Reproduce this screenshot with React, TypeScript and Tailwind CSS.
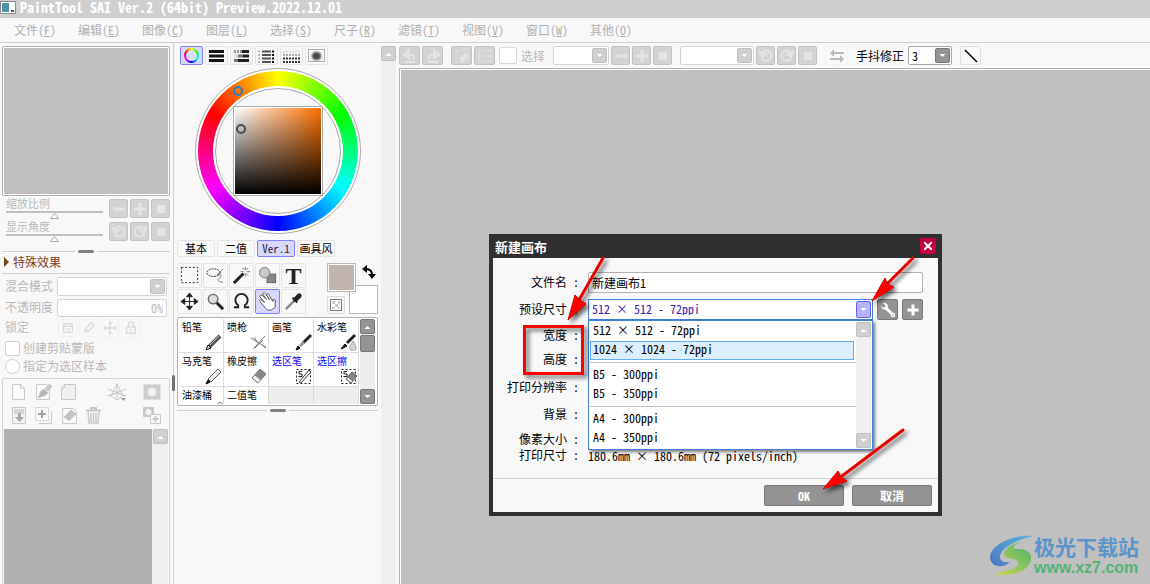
import type { ReactNode } from 'react';

const menus = [
  ['文件', 'F'], ['编辑', 'E'], ['图像', 'C'], ['图层', 'L'], ['选择', 'S'],
  ['尺子', 'R'], ['滤镜', 'T'], ['视图', 'V'], ['窗口', 'W'], ['其他', 'O'],
];

type IconProps = { children: ReactNode; className?: string; box?: string };

function Icon({ children, className = 'w-4 h-4', box = '0 0 16 16' }: IconProps) {
  return (
    <svg viewBox={box} className={`${className} shrink-0`} fill="none" stroke="currentColor" strokeWidth="1" aria-hidden="true">
      {children}
    </svg>
  );
}

const minus = <path d="M2 8h12" strokeWidth="3" />;
const plus = <path d="M2 8h12M8 2v12" strokeWidth="3" />;
const square = <rect x="4" y="4" width="8" height="8" fill="currentColor" stroke="none" />;
const rotateLeft = <path d="M4 10a5 5 0 1 0 1-6M2 4l2 5 4-3z" strokeWidth="2" />;
const rotateRight = <path d="M12 10a5 5 0 1 1-1-6M14 4l-2 5-4-3z" strokeWidth="2" />;

function GrayButton({ label, children, className = 'w-[19px]' }: { label: string; children: ReactNode; className?: string }) {
  return (
    <button
      aria-label={label}
      className={`${className} h-[19px] shrink-0 flex items-center justify-center rounded-xs border border-[#c3c3c3] bg-[#d3d3d3] text-[#e4e4e4]`}
    >
      <Icon>{children}</Icon>
    </button>
  );
}

function Arrow({ up = false }: { up?: boolean }) {
  return (
    <Icon className="w-[7px] h-1" box="0 0 7 4">
      <path d={up ? 'M.5 4h6L3.500 1z' : 'M.5 0h6L3.500 3z'} fill="currentColor" stroke="none" />
    </Icon>
  );
}

function ScrollButton({ up = false, dark = false }: { up?: boolean; dark?: boolean }) {
  const tone = dark ? 'bg-[#949494] border-[#777]' : 'bg-[#d0d0d0] border-[#c0c0c0]';
  return (
    <button aria-label={up ? '向上' : '向下'} className={`w-[15px] h-[15px] shrink-0 flex items-center justify-center rounded-xs border text-white ${tone}`}>
      <Arrow up={up} />
    </button>
  );
}

function Combo({ label, value = '', className, dark = false }: { label: string; value?: string; className: string; dark?: boolean }) {
  return (
    <div className={`${className} h-[19px] flex items-center shrink-0 border rounded-xs bg-white pr-px ${dark ? 'border-[#a8a8a8]' : 'border-[#d4d4d4]'}`}>
      <select aria-label={label} className="appearance-none flex-1 min-w-0 h-full pl-[3px] leading-none outline-none">
        <option>{value}</option>
      </select>
      <span className={`w-[15px] h-[15px] shrink-0 flex items-center justify-center rounded-xs border text-white ${dark ? 'bg-[#949494] border-[#777]' : 'bg-[#d0d0d0] border-[#c0c0c0]'}`}>
        <Arrow />
      </span>
    </div>
  );
}

function Splitter() {
  return (
    <div className="flex items-center gap-[3px] h-[3px]">
      <span className="flex-1 h-px bg-[#cfcfcf]" />
      <span className="w-4 h-[3px] rounded-xs bg-[#808080]" />
      <span className="flex-1 h-px bg-[#cfcfcf]" />
    </div>
  );
}

function ViewSlider({ label, children }: { label: string; children: ReactNode }) {
  return (
    <div className="flex items-center h-[23px] pl-1">
      <div className="flex-1 mr-1.5">
        <div className="text-[11px] leading-[11px] mb-0.5">{label}</div>
        <div className="h-0.5 bg-[#c0c0c0]" />
        <Icon className="w-[9px] h-[6px] mx-auto" box="0 0 9 6">
          <path d="M.5 5.500h8L4.500.5z" fill="#fff" stroke="#aaa" />
        </Icon>
      </div>
      <div className="flex gap-0.5">{children}</div>
    </div>
  );
}

const layerIcons = {
  page: <path d="M2.500 1.500h8l4 4v11h-12zM10.500 1.500v4h4" fill="#fafafa" />,
  pen: (
    <>
      <path d="M1.500 1.500h10l3 3v12h-13z" fill="#fafafa" />
      <path d="M3 15l3-7 3-2 4 4-2 2z" fill="#b5b5b5" />
      <path d="M11 7l5-5" strokeWidth="4" />
    </>
  ),
  folder: <path d="M1.500 16.500v-12l3-3h11v15zM4.500 1.500v3l-3 1" fill="#f0f0f0" />,
  ruler: (
    <>
      <path d="M9 0v17M0 13l9-3 9 3M9 1L3 13l6 4 6-4zM0 6l18 7M18 6L0 13" />
      <path d="M13 15h5l-2.500 3z" fill="#999" stroke="none" />
    </>
  ),
  mask: (
    <>
      <rect x="1" y="2" width="16" height="14" fill="#d0d0d0" />
      <circle cx="9" cy="9" r="4" fill="#f4f4f4" stroke="none" />
    </>
  ),
  merge: (
    <>
      <path d="M2.500.5h13v16h-13z" fill="#f4f4f4" />
      <path d="M4 2h10v5H4z" fill="#d5d5d5" stroke="none" />
      <path d="M8 6h3v4h3l-4.500 5L5 10h3z" fill="#a8a8a8" stroke="none" />
    </>
  ),
  copy: (
    <>
      <path d="M4 16.500h12.500V4" strokeWidth="1" />
      <path d="M.5.500h13v13H.5z" strokeDasharray="2 1" fill="#fafafa" />
      <path d="M7 3v8M3 7h8" stroke="#a0a0a0" strokeWidth="2" />
    </>
  ),
  clear: (
    <>
      <path d="M2.500 1.500h11l3 3v12h-14z" fill="#fafafa" />
      <path d="M4 10l7-7 5 4-7 7z" fill="#c4c4c4" />
    </>
  ),
  trash: (
    <>
      <path d="M1 3.500h15M6 3V1h5v2" strokeWidth="2" />
      <path d="M3 5l1 11h9l1-11M6 6v9M8.500 6v9M11 6v9" strokeWidth="1.500" />
    </>
  ),
  maskAdd: (
    <>
      <path d="M.5.500h10v9H.5z" fill="#c8c8c8" />
      <circle cx="5.500" cy="5" r="3" fill="#f4f4f4" stroke="none" />
      <path d="M7.500 7.500h10v9h-10z" fill="#fafafa" />
      <path d="M12.500 9v6M9.500 12h6" strokeWidth="2" />
    </>
  ),
};

function LayerButton({ name, label }: { name: keyof typeof layerIcons; label: string }) {
  return (
    <button aria-label={label} className="w-[19px] h-[18px] text-[#c8c8c8]">
      <Icon className="w-[18px] h-[18px]" box="0 0 18 18">{layerIcons[name]}</Icon>
    </button>
  );
}

const lockIcons = [
  { label: '锁定透明', d: 'M3 3h10v10H3zM6 3v3H3M9 3v3h4M6 9h3v4' },
  { label: '锁定绘画', d: 'M3 13l1-4 7-7 3 3-7 7zM4 9l3 3' },
  { label: '锁定移动', d: 'M8 1v14M1 8h14M6 3l2-2 2 2M6 13l2 2 2-2M3 6L1 8l2 2M13 6l2 2-2 2' },
  { label: '锁定全部', d: 'M3 7h10v7H3zM5 7V4a3 3 0 0 1 6 0v3M8 9v3' },
];

function LayerPanel() {
  return (
    <aside className="w-[174px] shrink-0 flex flex-col border-r border-[#cfcfcf] pt-[3px] pl-0.5 pr-[3px] text-[#b8b8b8]">
      <div className="h-[150px] shrink-0 border border-[#b0b0b0] rounded-xs bg-white p-px">
        <div className="h-full bg-[#c0c0c0]" />
      </div>
      <div className="pt-px pb-[7px]">
        <ViewSlider label="缩放比例">
          <GrayButton label="缩小">{minus}</GrayButton>
          <GrayButton label="放大">{plus}</GrayButton>
          <GrayButton label="重置缩放">{square}</GrayButton>
        </ViewSlider>
        <ViewSlider label="显示角度">
          <GrayButton label="左旋">{rotateLeft}</GrayButton>
          <GrayButton label="右旋">{rotateRight}</GrayButton>
          <GrayButton label="重置角度">{square}</GrayButton>
        </ViewSlider>
      </div>
      <Splitter />
      <button className="flex items-center gap-1 h-[21px] pl-0.5 pb-0.5 text-[#80401a] shrink-0 border-b border-[#cfcfcf]">
        <Icon className="w-[5px] h-[10px]" box="0 0 5 10">
          <path d="M0 0l5 5-5 5z" fill="currentColor" stroke="none" />
        </Icon>
        特殊效果
      </button>
      <div className="flex items-center h-[19px] mt-[3px] pl-[3px] gap-1 shrink-0">
        <span className="w-12 pb-0.5">混合模式</span>
        <Combo label="混合模式" className="w-[110px]" />
      </div>
      <div className="flex items-center h-[19px] mt-0.5 pl-[3px] gap-1 shrink-0">
        <label htmlFor="opacity" className="w-12 pb-0.5">不透明度</label>
        <input id="opacity" defaultValue="0%" className="w-[110px] h-[18px] border border-[#d4d4d4] rounded-xs bg-white text-right pr-[3px]" />
      </div>
      <div className="flex items-center h-[22px] pl-[3px] shrink-0">
        <span className="w-[53px] pb-0.5">锁定</span>
        <div className="flex gap-0.5">
          {lockIcons.map((lock) => (
            <button key={lock.label} aria-label={lock.label} className="w-[19px] h-[18px] flex items-center justify-center border border-[#f2f2f2] rounded-xs text-[#dadada]">
              <Icon className="w-3.5 h-3.5"><path d={lock.d} strokeWidth="1.500" /></Icon>
            </button>
          ))}
        </div>
      </div>
      <label className="flex items-center gap-[3px] h-[18px] pl-[3px] shrink-0">
        <input type="checkbox" className="appearance-none w-[15px] h-[15px] border border-[#d0d0d0] rounded-xs bg-white" />
        创建剪贴蒙版
      </label>
      <label className="flex items-center gap-[3px] h-[18px] pl-[3px] mb-px shrink-0">
        <input type="radio" className="appearance-none w-[15px] h-[15px] border border-[#d0d0d0] rounded-full bg-white" />
        指定为选区样本
      </label>
      <div className="flex-1 flex flex-col min-h-0 border border-b-0 border-[#d4d4d4] rounded-t-xs mt-0.5 px-px">
        <div className="flex items-center pt-1 px-1.5 gap-1.5 shrink-0">
          <LayerButton name="page" label="新建图层" />
          <LayerButton name="pen" label="新建钢笔图层" />
          <LayerButton name="folder" label="新建图层组" />
          <span className="flex-1" />
          <LayerButton name="ruler" label="透视尺" />
          <span className="w-1" />
          <LayerButton name="mask" label="图层蒙版" />
        </div>
        <div className="flex items-center pt-1.5 pb-1 px-1.5 gap-1.5 shrink-0">
          <LayerButton name="merge" label="向下合并" />
          <LayerButton name="copy" label="复制图层" />
          <LayerButton name="clear" label="清除图层" />
          <LayerButton name="trash" label="删除图层" />
          <span className="flex-1" />
          <LayerButton name="maskAdd" label="添加蒙版" />
        </div>
        <div className="flex-1 flex min-h-0">
          <div className="flex-1 bg-[#b0b0b0]" />
          <div className="w-4 bg-[#efefef] pl-px">
            <ScrollButton up />
          </div>
        </div>
      </div>
    </aside>
  );
}

function Bars({ kind }: { kind: number }) {
  if (kind === 0) return <path d="M1 3.500h15M1 8h15M1 12.500h15" stroke="#111" strokeWidth="3" />;
  if (kind === 1)
    return (
      <>
        <path d="M1 3.500h8" stroke="#999" strokeWidth="3" strokeDasharray="2 1" />
        <path d="M9 3.500h7M10 8h6M5 12.500h11" stroke="#222" strokeWidth="3" />
        <path d="M1 8h4" stroke="#ddd" strokeWidth="3" />
        <path d="M5 8h5M1 12.500h4" stroke="#777" strokeWidth="3" />
      </>
    );
  if (kind === 2)
    return (
      <>
        <path d="M4 3.500h9M4 7h9M4 10.500h9M4 14h9" stroke="#555" strokeWidth="2" />
        <path d="M0 3.500h3M0 7h3M0 10.500h3M0 14h3" stroke="#bbb" strokeWidth="2" strokeDasharray="2 1" />
        <path d="M14 3.500h3M14 7h3M14 10.500h3M14 14h3" stroke="#111" strokeWidth="2" strokeDasharray="2 1" />
      </>
    );
  return (
    <>
      <path d="M0 3.500h17" stroke="#ddd" strokeWidth="2" strokeDasharray="2 1" />
      <path d="M0 7h17" stroke="#aaa" strokeWidth="2" strokeDasharray="2 1" />
      <path d="M0 10.500h17M0 14h17" stroke="#333" strokeWidth="2" strokeDasharray="2 1" />
    </>
  );
}

function ColorModes() {
  return (
    <div className="flex gap-0.5">
      <button aria-label="色轮" className="w-[23px] h-[19px] flex items-center justify-center rounded-xs border border-[#8080ff] bg-[#d8d8ff]">
        <span className="w-[15px] h-[15px] rounded-full p-0.5 bg-[conic-gradient(#ff0,#0f0,#0ff,#00f,#f0f,#f00,#ff0)]">
          <span className="block w-full h-full rounded-full bg-[#dcdcff]" />
        </span>
      </button>
      {['RGB滑块', 'HSV滑块', '中间色', '色板'].map((label, i) => (
        <button key={label} aria-label={label} className="w-[23px] h-[19px] flex items-center justify-center rounded-xs border border-[#e4e4e4]">
          <Icon className="w-[17px] h-4" box="0 0 17 16"><Bars kind={i} /></Icon>
        </button>
      ))}
      <button aria-label="调色盘" className="w-[23px] h-[19px] flex items-center justify-center rounded-xs border border-[#e4e4e4]">
        <span className="w-[17px] h-[13px] border border-[#b0b0b0] flex items-center justify-center">
          <span className="w-[9px] h-2 rounded-full bg-[#444] blur-[1px]" />
        </span>
      </button>
    </div>
  );
}

function ColorWheel() {
  return (
    <div className="w-[166px] h-[166px] mx-auto rounded-full border border-[#aaa] p-0.5 bg-white">
      <div className="relative w-full h-full rounded-full bg-[conic-gradient(#ff0,#0f0,#0ff,#00f,#f0f,#f00,#ff0)] p-[15px]">
        <div className="w-full h-full rounded-full bg-white p-0.5">
          <div className="w-full h-full rounded-full border border-[#aaa] bg-[#f8f8f8] flex items-center justify-center">
            <div className="relative w-[90px] h-[90px] shrink-0 border border-[#aaa] bg-white p-px">
              <div className="w-full h-full bg-[linear-gradient(to_top,#000,transparent),linear-gradient(to_right,#fff,#ff7000)]" />
              <span className="absolute left-0.5 top-[17px] w-[10px] h-[10px] rounded-full border-2 border-[#444c50]" />
            </div>
          </div>
        </div>
        <span className="absolute left-[35px] top-[15px] w-[10px] h-[10px] rounded-full border-2 border-[#1c80d8]" />
      </div>
    </div>
  );
}

const tools = [
  { label: '矩形选择', icon: <rect x="2.500" y="2.500" width="17" height="16" strokeDasharray="2 2" /> },
  {
    label: '套索',
    icon: (
      <>
        <ellipse cx="9" cy="8" rx="7" ry="4" strokeDasharray="2 1" />
        <path d="M19 4l-6 6M13 10c4-1 5 2 2 4s0 4 4 4" stroke="#777" />
      </>
    ),
  },
  {
    label: '魔棒',
    icon: (
      <>
        <path d="M3 19L13 9" strokeWidth="3" />
        <path d="M15 2v3M15 9v3M10 7h3M17 7h3M12 3l2 2M18 3l-2 2M18 11l-2-2" stroke="#777" />
      </>
    ),
  },
  {
    label: '形状',
    icon: (
      <>
        <rect x="10.500" y="9.500" width="9" height="9" fill="#888" stroke="#666" />
        <circle cx="8" cy="8" r="5.500" fill="#c8c8c8" stroke="#777" />
      </>
    ),
  },
  { label: '文字', glyph: 'T' },
  { label: '移动', icon: <path d="M11 4v14M4 11h14M8 6l3-4 3 4zM8 16l3 4 3-4zM6 8l-4 3 4 3zM16 8l4 3-4 3z" fill="currentColor" /> },
  {
    label: '缩放',
    icon: (
      <>
        <path d="M12 12l7 7" strokeWidth="3" />
        <circle cx="8.500" cy="8.500" r="5" fill="#ddd" stroke="#666" strokeWidth="1.500" />
      </>
    ),
  },
  { label: '旋转', icon: <path d="M3 17h4.500v-2a6.500 6.500 0 1 1 7 0v2H19" strokeWidth="2" /> },
  {
    label: '抓手',
    active: true,
    icon: <path d="M9 18L3 11c-1-2 1-3 2-1l3 2-5-6c0-2 2-2 3-1l4 4-4-6c1-2 2-1 3 0l4 6-3-5c1-2 3-1 3 1l4 6v-2c2-1 3 1 2 3l0 5-4 3h-4z" fill="#fff" stroke="#555" />,
  },
  {
    label: '吸管',
    icon: (
      <>
        <path d="M3 19l9-9" strokeWidth="2.500" stroke="#888" />
        <path d="M10 7l5 5" strokeWidth="2" />
        <path d="M13 9l4-4" strokeWidth="5" strokeLinecap="round" />
      </>
    ),
  },
];

function ToolGrid() {
  return (
    <div className="flex justify-between">
      <div className="grid grid-cols-5 gap-px">
        {tools.map((tool) => (
          <button
            key={tool.label}
            aria-label={tool.label}
            className={`w-[25px] h-[25px] flex items-center justify-center rounded-xs border text-[#222] ${tool.active ? 'border-[#8080ff] bg-[#d8d8ff]' : 'border-[#e4e4e4]'}`}
          >
            {tool.glyph ? (
              <span className="text-[24px] leading-none font-bold font-['Liberation_Serif',serif]">{tool.glyph}</span>
            ) : (
              <Icon className="w-[21px] h-[21px]" box="0 0 22 22">{tool.icon}</Icon>
            )}
          </button>
        ))}
      </div>
      <div className="relative w-[51px] h-[51px]">
        <button aria-label="背景色" className="absolute right-0 bottom-0 w-[29px] h-[29px] border border-[#b8b8b8] bg-white" />
        <button aria-label="前景色" className="absolute left-0 top-0 w-[29px] h-[29px] border border-[#b8b8b8] bg-white p-px">
          <span className="block w-full h-full bg-[#c0b4ac]" />
        </button>
        <button aria-label="交换颜色" className="absolute right-0.5 top-0.5 w-3.5 h-3.5">
          <Icon className="w-3.5 h-3.5" box="0 0 14 14">
            <path d="M4 4c4 0 6 2 6 6" strokeWidth="2" />
            <path d="M0 4l5-4v8zM6 9h8l-4 5z" fill="currentColor" stroke="none" />
          </Icon>
        </button>
        <button aria-label="透明色" className="absolute left-0 bottom-0 w-[18px] h-[18px] flex items-center justify-center border border-[#dcdcdc] rounded-xs">
          <Icon className="w-3 h-3" box="0 0 12 12">
            <rect x=".5" y=".5" width="11" height="11" fill="#fff" stroke="#777" />
            <path d="M2 2h3v3H2zM8 2h2v3H8zM5 5h3v3H5zM2 8h3v2H2zM8 8h2v2H8z" fill="#ccc" stroke="none" />
          </Icon>
        </button>
      </div>
    </div>
  );
}

const brushArt = {
  pencil: (
    <>
      <path d="M4 14L15 3" strokeWidth="4" stroke="#555" />
      <path d="M1 17l2-5 3 3z" fill="#ddd" />
      <path d="M5 12l9-9" stroke="#bbb" />
    </>
  ),
  air: <path d="M1 5l11 7 4 2M3 16L15 3M5 15l8-8M4 4l4 6M12 12l4 3" stroke="#777" strokeWidth="1" />,
  brush: (
    <>
      <path d="M8 10l8-8" strokeWidth="3" stroke="#222" />
      <path d="M5 13l4-4" strokeWidth="3" stroke="#999" />
      <path d="M1 17l2-4 2 2z" fill="#111" />
    </>
  ),
  water: (
    <>
      <path d="M7 10l8-8" strokeWidth="3" stroke="#222" />
      <path d="M1 16l4-5 2 2z" fill="#333" />
      <path d="M13 8c-6 8-2 10 0 10s6-2 0-10z" fill="#d0d0d0" stroke="#aaa" />
    </>
  ),
  marker: (
    <>
      <path d="M3 12L13 2l3 3L6 15z" fill="#eee" stroke="#555" />
      <path d="M1 17l2-4 2 2z" fill="#222" />
    </>
  ),
  eraser: (
    <>
      <path d="M2 11l8-9 6 5-8 9z" fill="#888" stroke="#777" />
      <path d="M2 11l3-3 6 5-3 3z" fill="#eee" stroke="#888" />
    </>
  ),
  selPen: (
    <>
      <rect x="1.500" y="2.500" width="14" height="14" stroke="#222" strokeDasharray="2 2" />
      <path d="M4 15L14 3l2 2L6 16z" fill="#eee" stroke="#444" />
      <path d="M7 4.500H4v2.500h3v2.500H3.500" stroke="#222" />
    </>
  ),
  selEraser: (
    <>
      <rect x="1.500" y="2.500" width="14" height="14" stroke="#222" strokeDasharray="2 2" />
      <path d="M6 12l6-7 5 4-6 7z" fill="#888" stroke="#555" />
      <path d="M6 12l2-2 5 4-2 2z" fill="#eee" stroke="#666" />
      <path d="M7 4.500H4v2.500h3v2.500H3.500" stroke="#222" />
    </>
  ),
  bucket: <path d="M12 3l3-2 3 2" stroke="#888" />,
};

const brushes: { name: string; art?: keyof typeof brushArt; selection?: boolean }[] = [
  { name: '铅笔', art: 'pencil' },
  { name: '喷枪', art: 'air' },
  { name: '画笔', art: 'brush' },
  { name: '水彩笔', art: 'water' },
  { name: '马克笔', art: 'marker' },
  { name: '橡皮擦', art: 'eraser' },
  { name: '选区笔', art: 'selPen', selection: true },
  { name: '选区擦', art: 'selEraser', selection: true },
  { name: '油漆桶', art: 'bucket' },
  { name: '二值笔' },
  { name: '' },
  { name: '' },
];

function BrushList() {
  return (
    <div className="flex justify-between h-[89px] border border-[#b0b0b0] rounded-xs p-px pr-0.5 bg-white">
      <div className="grid grid-cols-4 auto-rows-[34px] h-full overflow-hidden">
        {brushes.map((brush, i) => (
          <button
            key={i}
            className={`w-[45px] flex flex-col border-r border-b border-[#dcdcdc] text-[10px] leading-3 text-left pl-[3px] pt-0.5 ${brush.name ? '' : 'bg-[#eee]'} ${brush.selection ? 'text-[#0000ff]' : 'text-black'}`}
          >
            <span className="h-3">{brush.name}</span>
            {brush.art && (
              <Icon className="w-[18px] h-[18px] ml-auto" box="0 0 18 18">{brushArt[brush.art]}</Icon>
            )}
          </button>
        ))}
      </div>
      <div className="w-[15px] flex flex-col bg-[#eee]">
        <ScrollButton up dark />
        <span className="h-[17px] mt-px rounded-xs border border-[#777] bg-[#949494]" />
        <span className="flex-1" />
        <ScrollButton dark />
      </div>
    </div>
  );
}

function ToolPanel() {
  return (
    <aside className="w-[225px] shrink-0 flex pt-[3px] pl-[3px]">
      <div className="w-[201px]">
        <div className="pl-[3px]"><ColorModes /></div>
        <div className="pt-[3px] pb-1.5"><ColorWheel /></div>
        <div className="flex gap-0.5 text-[11px]">
          {['基本', '二值', 'Ver.1', '画具风'].map((tab) => (
            <button
              key={tab}
              className={`w-[38px] h-[17px] flex items-center justify-center whitespace-nowrap rounded-xs border ${tab === 'Ver.1' ? 'border-[#8080ff] bg-[#d8d8ff] text-[#223]' : 'border-[#e4e4e4] text-black'}`}
            >
              {tab}
            </button>
          ))}
        </div>
        <div className="pt-1.5 pb-[3px]"><ToolGrid /></div>
        <BrushList />
        <div className="pt-[3px]"><Splitter /></div>
      </div>
      <div className="w-[15px] ml-[3px] bg-[#efefef]">
        <ScrollButton up />
      </div>
    </aside>
  );
}

function Toolbar() {
  return (
    <div className="flex items-center h-[25px] shrink-0 text-[#b8b8b8]">
      <div className="flex gap-0.5">
        <GrayButton label="撤销" className="w-[21px]"><path d="M4 7h6a3 3 0 0 1 1 5M3 14h10M7 2L2 7l5 3z" strokeWidth="2" /></GrayButton>
        <GrayButton label="重做" className="w-[21px]"><path d="M12 7H6a3 3 0 0 0-1 5M3 14h10M9 2l5 5-5 3z" strokeWidth="2" /></GrayButton>
      </div>
      <div className="flex gap-0.5 ml-2">
        <GrayButton label="取消选择" className="w-[21px]"><path d="M2 2h12v12H2z" strokeDasharray="2 1" /><path d="M6 11l5-6 3 3-5 6z" fill="currentColor" /></GrayButton>
        <GrayButton label="反选" className="w-[21px]"><path d="M2 3h12v4M2 3v4M1 8h14M2 9v4h12V9" strokeDasharray="2 1" strokeWidth="1.500" /></GrayButton>
      </div>
      <label className="flex items-center gap-1 ml-1">
        <input type="checkbox" className="appearance-none w-[18px] h-[17px] border border-[#dadada] rounded-xs bg-white" />
        选择
      </label>
      <div className="flex gap-0.5 ml-2">
        <Combo label="缩放比例" className="w-14" />
        <GrayButton label="缩小画布">{minus}</GrayButton>
        <GrayButton label="放大画布">{plus}</GrayButton>
        <GrayButton label="重置">{square}</GrayButton>
      </div>
      <div className="flex gap-0.5 ml-2">
        <Combo label="角度" className="w-[74px]" />
        <GrayButton label="逆时针">{rotateLeft}</GrayButton>
        <GrayButton label="顺时针">{rotateRight}</GrayButton>
        <GrayButton label="重置旋转">{square}</GrayButton>
      </div>
      <button aria-label="水平翻转" className="w-[23px] h-[19px] ml-2 flex items-center justify-center border border-[#f0f0f0] rounded-xs">
        <Icon><path d="M4 5h11M1 11h11" strokeWidth="2" /><path d="M5 1v8L1 5zM11 7v8l4-4z" fill="currentColor" stroke="none" /></Icon>
      </button>
      <span className="ml-2 mr-1 text-black">手抖修正</span>
      <div className="text-black"><Combo label="手抖修正" value="3" className="w-11" dark /></div>
      <button aria-label="直线" className="w-[21px] h-[19px] ml-2 flex items-center justify-center border border-[#e0e0e0] rounded-xs text-black">
        <Icon><path d="M2 2l12 12" strokeWidth="1.500" /></Icon>
      </button>
    </div>
  );
}

const presetGroups = [
  ['512 × 512 - 72ppi', '1024 × 1024 - 72ppi'],
  ['B5 - 300ppi', 'B5 - 350ppi'],
  ['A4 - 300ppi', 'A4 - 350ppi'],
];

function PresetList() {
  return (
    <div className="absolute left-0 top-full w-full flex border border-[#4080d8] bg-white p-px shadow-[2px_2px_3px_rgba(0,0,0,0.5)]">
      <div role="listbox" className="flex-1">
        {presetGroups.map((group, g) => (
          <div key={g} className={g > 0 ? 'border-t border-[#c0c0c0] mt-0.5 pt-[3px]' : ''}>
            {group.map((name) => (
              <div
                key={name}
                role="option"
                aria-selected={name.startsWith('1024')}
                className={`h-[19px] flex items-center mr-0.5 border pl-0.5 pb-[3px] ${name.startsWith('1024') ? 'border-[#60b0f0] bg-[#dceeff]' : 'border-transparent'}`}
              >
                {name}
              </div>
            ))}
          </div>
        ))}
      </div>
      <div className="w-[15px] flex flex-col justify-between bg-[#efefef]">
        <ScrollButton up />
        <ScrollButton />
      </div>
    </div>
  );
}

function FieldLabel({ text, htmlFor }: { text: string; htmlFor?: string }) {
  return <label htmlFor={htmlFor} className="w-[86px] shrink-0 text-right whitespace-pre pb-0.5">{`${text} :`}</label>;
}

function NewCanvasDialog() {
  return (
    <div role="dialog" aria-label="新建画布" className="absolute left-[489px] top-[234px] w-[453px] border-4 border-t-0 border-[#303030] bg-[#f8f8f8] text-black">
      <header className="flex items-center justify-between h-6 pl-0.5 pr-0.5 bg-[#303030] text-white font-bold text-[13px]">
        新建画布
        <button aria-label="关闭" className="w-4 h-4 flex items-center justify-center bg-[#c00040]">
          <Icon className="w-2 h-2" box="0 0 8 8"><path d="M0 0l8 8M8 0L0 8" strokeWidth="2" /></Icon>
        </button>
      </header>
      <div className="pt-3.5 pr-[15px] pb-3.5 border-b border-[#cfcfcf]">
        <div className="flex items-center gap-[9px]">
          <FieldLabel text="文件名" htmlFor="file-name" />
          <input id="file-name" defaultValue="新建画布1" className="flex-1 min-w-0 h-[21px] border border-[#b0b0b0] rounded-xs bg-white pl-[3px]" />
        </div>
        <div className="flex items-center gap-[9px] mt-1.5">
          <FieldLabel text="预设尺寸" htmlFor="preset" />
          <div className="flex-1 flex gap-1">
            <div className="relative flex-1 z-10">
              <div className="flex items-center h-[21px] border border-[#4080d8] bg-white pr-px">
                <select id="preset" className="appearance-none flex-1 h-full pl-[3px] pb-0.5 text-[#3c1cb4] outline-none">
                  <option>512 × 512 - 72ppi</option>
                </select>
                <span className="w-[15px] h-[17px] flex items-center justify-center rounded-xs border border-[#6060ff] bg-[#b4b4ff] text-white"><Arrow /></span>
              </div>
              <PresetList />
            </div>
            <button aria-label="编辑预设" className="w-[21px] h-[21px] flex items-center justify-center rounded-xs border border-[#777] bg-[#949494] text-white">
              <Icon>
                <path d="M5 5l8 8" strokeWidth="3" />
                <path d="M1 4a4 4 0 0 0 6 3l1-3a4 4 0 0 0-5-3l3 3-2 2z" fill="currentColor" stroke="none" />
                <circle cx="13" cy="13" r="1.500" fill="#949494" strokeWidth="1.500" />
              </Icon>
            </button>
            <button aria-label="添加预设" className="w-[21px] h-[21px] flex items-center justify-center rounded-xs border border-[#777] bg-[#949494] text-white">
              <Icon><path d="M2.500 8h11M8 2.500v11" strokeWidth="3" /></Icon>
            </button>
          </div>
        </div>
        <div className="flex items-center h-6 mt-1"><FieldLabel text="宽度" /></div>
        <div className="flex items-center h-6"><FieldLabel text="高度" /></div>
        <div className="flex items-center h-[27px] mt-0.5"><FieldLabel text="打印分辨率" /></div>
        <div className="flex items-center h-[27px]"><FieldLabel text="背景" /></div>
        <div className="flex items-center h-4 mt-1"><FieldLabel text="像素大小" /></div>
        <div className="flex items-center h-4 gap-[9px]">
          <FieldLabel text="打印尺寸" />
          <span>180.6mm × 180.6mm (72 pixels/inch)</span>
        </div>
      </div>
      <footer className="flex justify-end gap-2 pt-1.5 pb-1.5 pr-1.5 text-white font-bold">
        <button className="w-20 h-[21px] rounded-xs border border-[#777] bg-[#949494]">OK</button>
        <button className="w-20 h-[21px] rounded-xs border border-[#777] bg-[#949494]">取消</button>
      </footer>
    </div>
  );
}

// red callouts drawn over the dialog
function Callouts() {
  return (
    <svg viewBox="515 250 400 250" className="absolute left-[515px] top-[250px] w-[400px] h-[250px] z-20 pointer-events-none drop-shadow-[3px_3px_2px_rgba(0,0,0,0.6)]" aria-hidden="true">
      <rect x="524.500" y="326.500" width="58" height="47" fill="none" stroke="#f00" strokeWidth="3" />
      <g stroke="#e80000" strokeWidth="3" strokeLinecap="round">
        <path d="M603 258L579 300" />
        <path d="M913 258L887 284" />
        <path d="M903 430L842 476" />
      </g>
      <g fill="#f00" stroke="#d00" strokeWidth="1">
        <path d="M568 320l7-25 4 4 7 5z" />
        <path d="M872 301l13-23 2 6 7 3z" />
        <path d="M823 489l15-18 3 6 6 4z" />
      </g>
    </svg>
  );
}

function Watermark() {
  return (
    <div className="absolute right-[11px] bottom-[7px] flex items-center">
      <svg viewBox="0 0 44 40" className="w-11 h-10" aria-hidden="true">
        <defs>
          <linearGradient id="wm-blue" x1="0" y1="1" x2="1" y2="0">
            <stop offset="0" stopColor="#4a78c0" />
            <stop offset="1" stopColor="#58b4d8" />
          </linearGradient>
          <linearGradient id="wm-green" x1="0" y1="1" x2="1" y2="0">
            <stop offset="0" stopColor="#d0d84c" />
            <stop offset="1" stopColor="#48b070" />
          </linearGradient>
        </defs>
        <path d="M43 1C25-1 1 9 0 22c0 7 6 10 12 9 3 0 6-2 8-4-6 1-10-1-10-5C10 13 26 5 43 1z" fill="url(#wm-blue)" />
        <path d="M33 7c-9 1-18 5-19 12 0 7 13 2 14 9 0 5-9 8-24 11 17 3 34-2 37-14 1-8-5-11-13-11-4 0-6-1-4-3 2-2 5-3 9-4z" fill="url(#wm-green)" />
      </svg>
      <div className="font-bold whitespace-nowrap">
        <div className="text-[21px] leading-[26px] text-[#5a94cc] font-['Noto_Sans_CJK_SC',sans-serif]">极光下载站</div>
        <div className="text-base leading-[18px] text-[#52b474] font-['Liberation_Sans',sans-serif]">www.xz7.com</div>
      </div>
    </div>
  );
}

export default function App() {
  return (
    <div className="relative h-screen w-full overflow-hidden flex flex-col bg-[#f8f8f8] text-xs leading-none font-['Noto_Sans_Mono_CJK_SC','Noto_Sans_CJK_SC',sans-serif]">
      <header className="h-[18px] shrink-0 flex items-start bg-[#cfcfcf] text-white font-bold text-sm leading-[14px]">
        <Icon className="w-4 h-[13px] mr-1 mt-px" box="0 0 16 13">
          <path d="M.5.500h15v12H.5z" fill="#fff" stroke="#888" />
          <path d="M2 2h7v9H2z" fill="#4c94a8" stroke="none" />
          <path d="M11 9h3v2h-3z" fill="#555" stroke="none" />
        </Icon>
        PaintTool SAI Ver.2 (64bit) Preview.2022.12.01
      </header>
      <nav className="h-[25px] shrink-0 flex items-center gap-[22px] pl-3.5 border-b border-[#cfcfcf] text-[#b0b0b0]">
        {menus.map(([name, key]) => (
          <button key={key} className="w-[42px] whitespace-nowrap text-left">
            {name}(<span className="underline">{key}</span>)
          </button>
        ))}
      </nav>
      <div className="flex-1 flex min-h-0">
        <LayerPanel />
        <ToolPanel />
        <main className="flex-1 flex flex-col min-w-0">
          <Toolbar />
          <div className="flex-1 border-l border-t border-[#b0b0b0] pl-px pt-px bg-white">
            <div className="h-full bg-[#c0c0c0]" />
          </div>
        </main>
      </div>
      <span className="absolute left-[172px] top-[375px] w-[3px] h-4 rounded-xs bg-[#707070]" />
      <NewCanvasDialog />
      <Callouts />
      <Watermark />
    </div>
  );
}
